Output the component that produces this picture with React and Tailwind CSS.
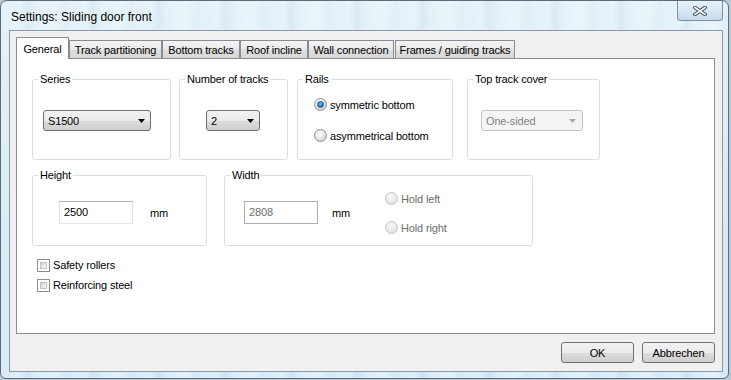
import React from "react";

function Arrow({ disabled }) {
  return (
    <svg width="7" height="4" viewBox="0 0 7 4" className="block">
      <path d="M0 0H7L3.5 4Z" fill={disabled ? "#a8a8a8" : "#000"} />
    </svg>
  );
}

function Combo({ value, w, disabled }) {
  return (
    <div
      className={
        disabled
          ? "h-[21px] flex items-center justify-between pl-[4px] pr-[6px] rounded-[3px] border border-[#c0c4c8] bg-[#f4f4f4] text-[#838383]"
          : "h-[21px] flex items-center justify-between pl-[4px] pr-[5px] rounded-[3px] border border-[#707070] bg-[linear-gradient(180deg,#f2f2f2_0%,#ebebeb_50%,#dddddd_50%,#cfcfcf_100%)]"
      }
      style={{ width: w }}
    >
      <span>{value}</span>
      <Arrow disabled={disabled} />
    </div>
  );
}

function Radio({ checked, disabled }) {
  return (
    <div
      className={
        disabled
          ? "w-[13px] h-[13px] rounded-full border border-[#c4c4c4] bg-[radial-gradient(circle_at_40%_35%,#fafafa_0%,#e4e4e4_70%)] shrink-0"
          : "w-[13px] h-[13px] rounded-full border border-[#8e8f8f] bg-[radial-gradient(circle_at_40%_35%,#ffffff_0%,#d6d6d6_75%)] flex items-center justify-center shrink-0"
      }
    >
      {checked && (
        <div className="w-[7px] h-[7px] rounded-full bg-[radial-gradient(circle_at_45%_40%,#8fd2fb_0%,#2a8ad4_45%,#0d4f87_100%)] border border-[#27578a]" />
      )}
    </div>
  );
}

function Checkbox() {
  return (
    <div className="w-[13px] h-[13px] border border-[#8e8f8f] bg-white p-[2px] shrink-0">
      <div className="w-full h-full bg-[linear-gradient(135deg,#cdd0d4_0%,#e8e9ea_60%,#f6f6f6_100%)] border border-[#bfc3c8]" />
    </div>
  );
}

function Group({ label, w, h, children }) {
  return (
    <fieldset
      className="border border-[#d5dfe5] rounded-[3px] shrink-0"
      style={{ width: w, height: h }}
    >
      <legend className="ml-[5px] px-[2px] leading-[14px]">{label}</legend>
      {children}
    </fieldset>
  );
}

function TextBox({ value, disabled }) {
  return (
    <div
      className={
        disabled
          ? "w-[74px] h-[23px] border border-[#adadad] bg-white pl-[4px] pt-[3px] text-[#6d6d6d]"
          : "w-[74px] h-[23px] border border-[#abadb3] border-l-[#dbdfe6] border-r-[#dbdfe6] border-b-[#e3e9ef] bg-white pl-[4px] pt-[3px]"
      }
    >
      {value}
    </div>
  );
}

const tabs = [
  { label: "Track partitioning", w: 93, ml: 0 },
  { label: "Bottom tracks", w: 78, ml: 0 },
  { label: "Roof incline", w: 68, ml: 0 },
  { label: "Wall connection", w: 86, ml: 0 },
  { label: "Frames / guiding tracks", w: 120, ml: 1 },
];

export default function App() {
  return (
    <div className="w-[731px] h-[380px] bg-[#b9cad6] overflow-hidden font-['Liberation_Sans',Arial,sans-serif] text-[11px] tracking-[-0.15px] leading-[14px] text-black">
      <div className="w-[729px] h-[379px] rounded-t-[7px] rounded-b-[6px] border border-[#5b6b7a] bg-[linear-gradient(180deg,rgba(255,255,255,0.35)_0%,rgba(255,255,255,0.1)_60%),repeating-linear-gradient(90deg,#d6e9f6_0px,#dcedf8_18px,#cadfee_26px,#d8eaf7_34px,#e0eff9_52px,#d2e6f3_66px)] flex flex-col">
        <div className="h-[29px] flex items-start justify-between shrink-0">
          <span className="mt-[9px] ml-[10px] text-[12px] tracking-normal leading-[14px]">Settings: Sliding door front</span>
          <div className="mr-[5px] w-[46px] h-[20px] rounded-b-[4px] border border-t-0 border-[#7d8e9d] bg-[linear-gradient(180deg,#e9f3fa_0%,#d6e6f2_50%,#c8dbea_100%)] flex items-center justify-center">
            <svg width="14" height="10" viewBox="0 0 14 10">
              <path d="M2 1.5L12 8.5M12 1.5L2 8.5" stroke="#44515d" strokeWidth="3.6" strokeLinecap="square" />
              <path d="M2 1.5L12 8.5M12 1.5L2 8.5" stroke="#ffffff" strokeWidth="1.6" strokeLinecap="square" />
            </svg>
          </div>
        </div>
        <div className="ml-[8px] w-[714px] h-[342px] border border-[#8c9ba8] bg-[#f0f0f0] flex flex-col">
          <div className="ml-[6px] mt-[6px] h-[21px] flex items-end">
            <div className="w-[53px] h-[22px] -mb-px relative z-10 bg-white border border-b-0 border-[#898c95] flex justify-center pt-[4px]">
              General
            </div>
            {tabs.map((t) => (
              <div
                key={t.label}
                className="h-[18px] border border-b-0 border-[#898c95] bg-[linear-gradient(180deg,#f3f3f3_0%,#ebebeb_45%,#dedede_55%,#d8d8d8_100%)] flex justify-center pt-[2px] whitespace-nowrap"
                style={{ width: t.w, marginLeft: t.ml }}
              >
                {t.label}
              </div>
            ))}
          </div>
          <div className="ml-[6px] w-[699px] h-[276px] border border-[#898c95] bg-white pt-[13px] pl-[15px] flex flex-col">
            <div className="flex">
              <Group label="Series" w={139} h={88}>
                <div className="pt-[24px] pl-[10px]">
                  <Combo value="S1500" w={108} />
                </div>
              </Group>
              <div className="ml-[8px]">
                <Group label="Number of tracks" w={109} h={88}>
                  <div className="pt-[24px] pl-[26px]">
                    <Combo value="2" w={54} />
                  </div>
                </Group>
              </div>
              <div className="ml-[9px]">
                <Group label="Rails" w={156} h={88}>
                  <div className="pt-[12px] pl-[16px] flex flex-col gap-[18px]">
                    <div className="h-[13px] flex items-center">
                      <Radio checked />
                      <span className="ml-[3px]">symmetric bottom</span>
                    </div>
                    <div className="h-[13px] flex items-center">
                      <Radio />
                      <span className="ml-[3px]">asymmetrical bottom</span>
                    </div>
                  </div>
                </Group>
              </div>
              <div className="ml-[14px]">
                <Group label="Top track cover" w={133} h={88}>
                  <div className="pt-[24px] pl-[13px]">
                    <Combo value="One-sided" w={102} disabled />
                  </div>
                </Group>
              </div>
            </div>
            <div className="flex mt-[8px]">
              <Group label="Height" w={175} h={78}>
                <div className="flex items-start pl-[26px]">
                  <div className="mt-[19px]">
                    <TextBox value="2500" />
                  </div>
                  <span className="mt-[24px] ml-[17px]">mm</span>
                </div>
              </Group>
              <div className="ml-[17px]">
                <Group label="Width" w={309} h={78}>
                  <div className="flex items-start pl-[19px]">
                    <div className="mt-[19px]">
                      <TextBox value="2808" disabled />
                    </div>
                    <span className="mt-[24px] ml-[14px] w-[53px]">mm</span>
                    <div className="mt-[10px] flex flex-col gap-[16px] text-[#6d6d6d]">
                      <div className="h-[13px] flex items-center">
                        <Radio disabled />
                        <span className="ml-[3px]">Hold left</span>
                      </div>
                      <div className="h-[13px] flex items-center">
                        <Radio disabled />
                        <span className="ml-[3px]">Hold right</span>
                      </div>
                    </div>
                  </div>
                </Group>
              </div>
            </div>
            <div className="mt-[9px] ml-[5px] flex flex-col">
              <div className="h-[20px] flex items-center">
                <Checkbox />
                <span className="ml-[3px]">Safety rollers</span>
              </div>
              <div className="h-[20px] flex items-center">
                <Checkbox />
                <span className="ml-[3px]">Reinforcing steel</span>
              </div>
            </div>
          </div>
          <div className="ml-[6px] w-[699px] mt-[8px] flex justify-end gap-[8px]">
            <div className="w-[73px] h-[21px] rounded-[3px] border border-[#707070] bg-[linear-gradient(180deg,#f2f2f2_0%,#ebebeb_50%,#dddddd_50%,#cfcfcf_100%)] flex items-center justify-center">
              OK
            </div>
            <div className="w-[73px] h-[21px] rounded-[3px] border border-[#707070] bg-[linear-gradient(180deg,#f2f2f2_0%,#ebebeb_50%,#dddddd_50%,#cfcfcf_100%)] flex items-center justify-center">
              Abbrechen
            </div>
          </div>
        </div>
      </div>
    </div>
  );
}
